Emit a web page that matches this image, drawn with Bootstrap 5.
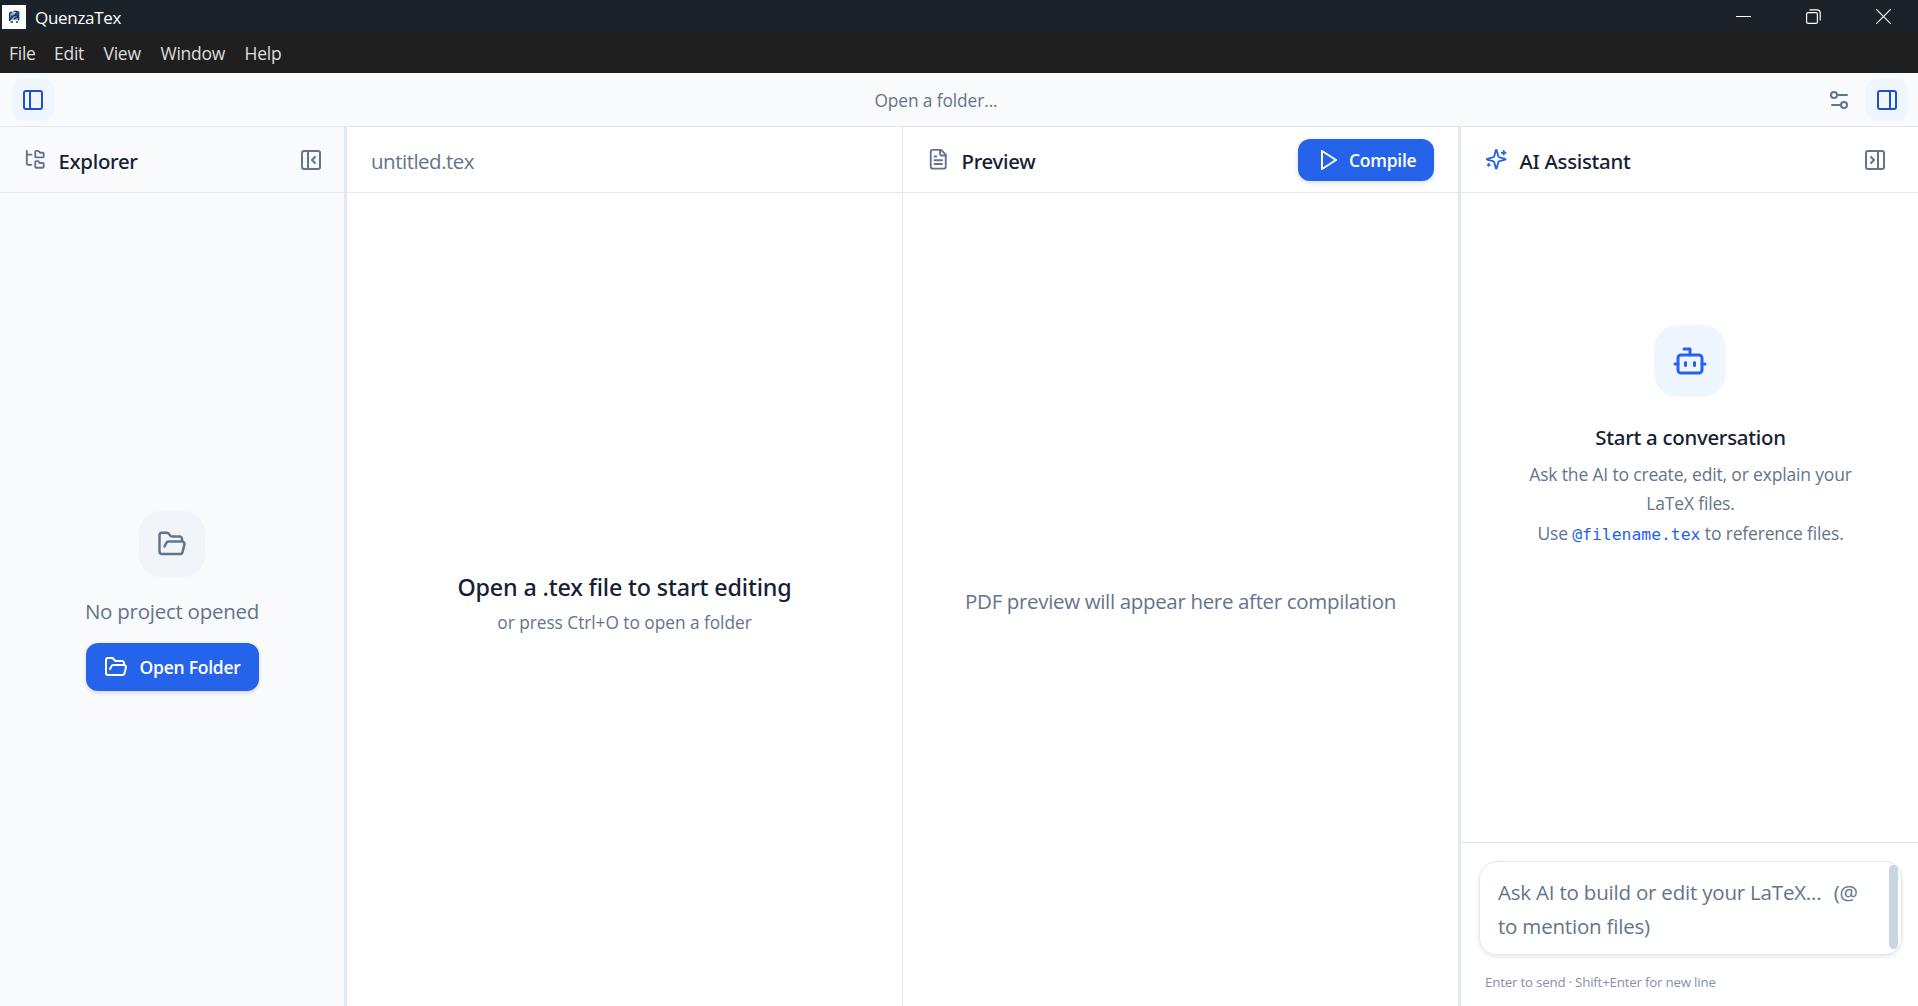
<!DOCTYPE html>
<html lang="en">
<head>
<meta charset="utf-8">
<meta name="viewport" content="width=device-width, initial-scale=1">
<title>QuenzaTex</title>
<link href="https://cdn.jsdelivr.net/npm/bootstrap@5.3.0/dist/css/bootstrap.min.css" rel="stylesheet">
<script src="https://cdn.jsdelivr.net/npm/bootstrap@5.3.0/dist/js/bootstrap.bundle.min.js"></script>
<style>
:root{--line:#e2e8f0;--muted:#64748b;--ink:#172033;--brand:#2563eb;--pale:#f8fafc}
body{font-family:"Open Sans","Noto Sans",sans-serif;font-size:17.5px;letter-spacing:-.17px;color:var(--ink);background:#fff;overflow:hidden}
svg{display:block;flex:none}
.ic{fill:none;stroke:currentColor;stroke-width:2;stroke-linecap:round;stroke-linejoin:round}
.thin{stroke-width:1.75}
.titlebar{height:33px;background:#1b2228;color:#fff;padding-left:2px}
.app-name{font-size:17px;letter-spacing:-.3px;margin-left:9px;line-height:24px;padding-top:2px}
.win-controls{gap:55px;padding-right:27px}
.menubar{height:40px;background:#1f1f1f;color:#dedede;padding-left:9px}
.menubar a{color:inherit;text-decoration:none;letter-spacing:-.25px;line-height:26px}
.menu-file{width:45px}.menu-edit{width:49.5px}.menu-view{width:57px}.menu-window{width:84px}
.topbar{height:54px;background:var(--pale);border-bottom:1px solid var(--line);padding:0 10px 0 12px}
.folder-label{font-size:17.3px;letter-spacing:-.08px;color:var(--muted);line-height:26px;padding-top:2px}
.tool-btn{width:42px;height:42px;border-radius:12px;border:0;padding:9px;background:transparent;color:var(--muted)}
.tool-btn.is-on{background:#eff6ff;color:#1d4ed8}
.pane-head{height:66px;border-bottom:1px solid var(--line);padding:0 24px}
.pane-title{font-family:"Noto Sans",sans-serif;font-size:20.4px;font-weight:500;letter-spacing:-.3px;line-height:28px;padding-top:2px}
.head-icon{width:22.5px;height:22.5px;margin-right:12px}
.explorer{width:344px;background:var(--pale)}
.explorer .pane-head{padding-right:12px}
.explorer-empty{padding-top:318px}
.split{width:3px;background:var(--line)}
.preview{border-left:1px solid var(--line)}
.assistant{width:457px}
.assistant .pane-head{padding-right:22px}
.muted{color:var(--muted)}
.accent{color:var(--brand)}
.body-lg{font-size:20.5px;letter-spacing:-.34px;line-height:32px}
.file-name{letter-spacing:-.5px;padding-top:2px}
.no-project{letter-spacing:-.25px;margin:18px 0 16px}
.brand-btn{--bs-btn-bg:var(--brand);--bs-btn-border-color:var(--brand);--bs-btn-color:#fff;--bs-btn-hover-bg:#1d4ed8;--bs-btn-border-width:0px;--bs-btn-border-radius:12px;--bs-btn-font-size:17.5px;--bs-btn-font-weight:600;--bs-btn-line-height:24px;letter-spacing:-.25px;box-shadow:0 1.5px 4px rgba(15,23,42,.14)}
.compile-btn{width:136px;height:42px;padding:1px 0 0 18px;gap:9px}
.open-btn{width:173px;height:48px;padding:0 0 0 18px;gap:12px}
.folder-tile{width:66px;height:66px;border-radius:22px;background:#f1f5f9;color:var(--muted)}
.bot-tile{width:72px;height:72px;border-radius:24px;background:#eff6ff;color:var(--brand)}
.editor-empty{padding-top:6px}
.empty-title{font-family:"Noto Sans",sans-serif;font-size:23.3px;font-weight:500;letter-spacing:-.16px;line-height:36px}
.empty-sub{font-size:17.3px;letter-spacing:-.03px;line-height:27px;margin-top:4px}
.pdf-note{padding-top:3px}
.chat-empty{padding-top:132px}
.chat-title{margin:24px 0 9px 2px;letter-spacing:-.27px}
.chat-copy{width:344px;line-height:29.25px;padding-left:2px}
.file-ref{font-family:"DejaVu Sans Mono",monospace;font-size:16.4px;letter-spacing:0;color:var(--brand)}
.composer{border-top:1px solid var(--line);height:164px;padding:18px 16px 0 18px}
.prompt-box{height:93.5px;border:1.5px solid var(--line);border-radius:18px;box-shadow:0 2px 4px rgba(15,23,42,.1);padding:13px 3px 0 18px}
.prompt-text{font-size:20.5px;letter-spacing:-.2px;line-height:34px;color:var(--muted);white-space:pre-line}
.prompt-text .at{margin-left:2px}
.thumb{width:9px;height:84px;border-radius:5px;background:#cbd5e1;margin-top:-10px}
.hint{font-size:13.3px;letter-spacing:-.2px;color:#8492a8;padding-left:6px;margin-top:17.5px;line-height:20px}
</style>
</head>
<body class="vh-100 d-flex flex-column">
<header class="titlebar d-flex align-items-center justify-content-between">
  <div class="d-flex align-items-center">
    <svg width="24" height="24" viewBox="0 0 24 24"><path fill="#fff" d="M0 0h24v24H0z"/><path fill="#9fb4d0" d="M8 8h8v7H8z"/><path fill="none" stroke="#12376b" stroke-width="1.500" d="M7.700 7.500v8.500M16.600 6.500v9M8 14.500l8.500-8M8 7.500h2.500M11.500 6.500h4M9 11.500l7-1.500M12 14l4-2.500M8.500 17h2.500M14 17h2"/></svg>
    <span class="app-name">QuenzaTex</span>
  </div>
  <div class="win-controls d-flex align-items-center">
    <svg width="15" height="15" viewBox="0 0 15 15" stroke="#fff"><path d="M0 7.500h15" stroke-width="1"/></svg>
    <svg width="15" height="15" viewBox="0 0 15 15" fill="none" stroke="#fff" stroke-width="1.2"><rect x=".6" y="3.6" width="10.8" height="10.8" rx="1.5"/><path d="M3.5.8H11a3.200 3.200 0 0 1 3.200 3.200v7.500"/></svg>
    <svg width="15" height="15" viewBox="0 0 15 15" stroke="#fff" stroke-width="1.2"><path d="M0 0l15 15M15 0L0 15"/></svg>
  </div>
</header>
<nav class="menubar d-flex align-items-center">
  <a href="#" class="menu-file">File</a><a href="#" class="menu-edit">Edit</a><a href="#" class="menu-view">View</a><a href="#" class="menu-window">Window</a><a href="#">Help</a>
</nav>
<div class="topbar d-flex align-items-center justify-content-between">
  <button class="tool-btn is-on" aria-label="Toggle explorer"><svg class="ic" width="24" height="24" viewBox="0 0 24 24"><rect x="3" y="3" width="18" height="18" rx="2"/><path d="M9 3v18"/></svg></button>
  <div class="folder-label">Open a folder...</div>
  <div class="d-flex" style="gap:6px">
    <button class="tool-btn" aria-label="Settings"><svg class="ic" width="24" height="24" viewBox="0 0 24 24"><path d="M20 7h-9M14 17H5"/><circle cx="17" cy="17" r="3"/><circle cx="7" cy="7" r="3"/></svg></button>
    <button class="tool-btn is-on" aria-label="Toggle assistant"><svg class="ic" width="24" height="24" viewBox="0 0 24 24"><rect x="3" y="3" width="18" height="18" rx="2"/><path d="M15 3v18"/></svg></button>
  </div>
</div>
<main class="d-flex flex-grow-1">
  <aside class="explorer d-flex flex-column">
    <div class="pane-head d-flex align-items-center">
      <svg class="ic head-icon muted" viewBox="0 0 24 24"><path d="M20 10a1 1 0 0 0 1-1V6a1 1 0 0 0-1-1h-2.500a1 1 0 0 1-.8-.4l-.9-1.200A1 1 0 0 0 15 3h-2a1 1 0 0 0-1 1v5a1 1 0 0 0 1 1ZM20 21a1 1 0 0 0 1-1v-3a1 1 0 0 0-1-1h-2.900a1 1 0 0 1-.88-.55l-.42-.85a1 1 0 0 0-.92-.6H13a1 1 0 0 0-1 1v5a1 1 0 0 0 1 1ZM3 5a2 2 0 0 0 2 2h3M3 3v13a2 2 0 0 0 2 2h3"/></svg>
      <span class="pane-title">Explorer</span>
      <button class="tool-btn ms-auto" aria-label="Collapse explorer"><svg class="ic" width="24" height="24" viewBox="0 0 24 24"><rect x="3" y="3" width="18" height="18" rx="2"/><path d="M9 3v18M16 15l-3-3 3-3"/></svg></button>
    </div>
    <div class="explorer-empty flex-grow-1 d-flex flex-column align-items-center">
      <div class="folder-tile d-flex align-items-center justify-content-center"><svg class="ic" width="30" height="30" viewBox="0 0 24 24"><path d="m6 14 1.500-2.900A2 2 0 0 1 9.240 10H20a2 2 0 0 1 1.940 2.500l-1.540 6a2 2 0 0 1-1.950 1.500H4a2 2 0 0 1-2-2V5a2 2 0 0 1 2-2h3.900a2 2 0 0 1 1.690.9l.81 1.200a2 2 0 0 0 1.670.9H18a2 2 0 0 1 2 2v2"/></svg></div>
      <div class="body-lg muted no-project">No project opened</div>
      <button class="btn brand-btn open-btn d-flex align-items-center"><svg class="ic" width="24" height="24" viewBox="0 0 24 24"><path d="m6 14 1.500-2.900A2 2 0 0 1 9.240 10H20a2 2 0 0 1 1.940 2.500l-1.540 6a2 2 0 0 1-1.950 1.500H4a2 2 0 0 1-2-2V5a2 2 0 0 1 2-2h3.900a2 2 0 0 1 1.690.9l.81 1.200a2 2 0 0 0 1.670.9H18a2 2 0 0 1 2 2v2"/></svg>Open Folder</button>
    </div>
  </aside>
  <div class="split"></div>
  <section class="editor col d-flex flex-column">
    <div class="pane-head d-flex align-items-center"><span class="body-lg muted file-name">untitled.tex</span></div>
    <div class="editor-empty flex-grow-1 d-flex flex-column align-items-center justify-content-center text-center">
      <div class="empty-title">Open a .tex file to start editing</div>
      <div class="empty-sub muted">or press Ctrl+O to open a folder</div>
    </div>
  </section>
  <section class="preview col d-flex flex-column">
    <div class="pane-head d-flex align-items-center">
      <svg class="ic head-icon muted" viewBox="0 0 24 24"><path d="M15 2H6a2 2 0 0 0-2 2v16a2 2 0 0 0 2 2h12a2 2 0 0 0 2-2V7Z"/><path d="M14 2v4a2 2 0 0 0 2 2h4M10 9H8M16 13H8M16 17H8"/></svg>
      <span class="pane-title">Preview</span>
      <button class="btn brand-btn compile-btn d-flex align-items-center ms-auto"><svg class="ic" width="24" height="24" viewBox="0 0 24 24"><path d="m6 3 14 9-14 9z"/></svg>Compile</button>
    </div>
    <div class="pdf-note flex-grow-1 d-flex align-items-center justify-content-center body-lg muted">PDF preview will appear here after compilation</div>
  </section>
  <div class="split"></div>
  <aside class="assistant d-flex flex-column">
    <div class="pane-head d-flex align-items-center">
      <svg class="ic head-icon accent" viewBox="0 0 24 24"><path d="M9.937 15.500A2 2 0 0 0 8.500 14.063l-6.135-1.582a.5.5 0 0 1 0-.962L8.500 9.936A2 2 0 0 0 9.937 8.500l1.582-6.135a.5.5 0 0 1 .963 0L14.063 8.500A2 2 0 0 0 15.500 9.937l6.135 1.581a.5.5 0 0 1 0 .964L15.500 14.063a2 2 0 0 0-1.437 1.437l-1.582 6.135a.5.5 0 0 1-.963 0zM20 3v4M22 5h-4M4 17v2M5 18H3"/></svg>
      <span class="pane-title">AI Assistant</span>
      <button class="tool-btn ms-auto" aria-label="Collapse assistant"><svg class="ic" width="24" height="24" viewBox="0 0 24 24"><rect x="3" y="3" width="18" height="18" rx="2"/><path d="M15 3v18M8 9l3 3-3 3"/></svg></button>
    </div>
    <div class="chat-empty flex-grow-1 d-flex flex-column align-items-center text-center">
      <div class="bot-tile d-flex align-items-center justify-content-center"><svg class="ic" width="36" height="36" viewBox="0 0 24 24"><path d="M12 8V4H8"/><rect x="4" y="8" width="16" height="12" rx="2"/><path d="M2 14h2M20 14h2M15 13v2M9 13v2"/></svg></div>
      <div class="pane-title chat-title">Start a conversation</div>
      <div class="chat-copy muted">Ask the AI to create, edit, or explain your LaTeX files.<br>Use <span class="file-ref">@filename.tex</span> to reference files.</div>
    </div>
    <div class="composer">
      <div class="prompt-box d-flex justify-content-between">
        <div class="prompt-text">Ask AI to build or edit your LaTeX...&nbsp; <span class="at">(@</span>
to mention files)</div>
        <div class="thumb"></div>
      </div>
      <div class="hint">Enter to send · Shift+Enter for new line</div>
    </div>
  </aside>
</main>
</body>
</html>
